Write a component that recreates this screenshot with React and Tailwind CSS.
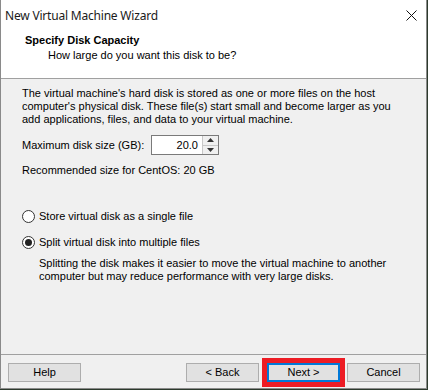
import React from "react";

function Btn({ children, focused }) {
  return (
    <div
      className={
        "w-[73px] h-[19px] flex items-center justify-center bg-[#e1e1e1] text-[11px] text-black " +
        (focused ? "border-2 border-[#0078d7]" : "border border-[#adadad]")
      }
    >
      {children}
    </div>
  );
}

function Radio({ checked, label }) {
  return (
    <div className="flex items-center h-[16px]">
      <div className="w-[13px] h-[13px] rounded-full border border-[#333] bg-white flex items-center justify-center">
        {checked && <div className="w-[7px] h-[7px] rounded-full bg-[#222]" />}
      </div>
      <span className="ml-[4px]">{label}</span>
    </div>
  );
}

export default function App() {
  return (
    <div className="w-[428px] h-[390px] bg-[#2c3a2c]" style={{ fontFamily: '"Liberation Sans", Arial, sans-serif' }}>
      <div className="w-[427px] h-[389px] flex flex-col bg-[#f0f0f0] border-l border-r border-b border-[#8a8a8a] text-[11px] text-black leading-[13px]">
        {/* Title bar */}
        <div className="h-[30px] bg-white flex items-center justify-between pl-[4px] pr-[8px] shrink-0">
          <span className="text-[12px] text-[#1a1a1a] tracking-[-0.2px]" style={{ fontFamily: '"Noto Sans", "Open Sans", sans-serif' }}>
            New Virtual Machine Wizard
          </span>
          <svg width="11" height="11" viewBox="0 0 11 11" className="mr-[1px]">
            <path d="M0.5 0.5 L10.5 10.5 M10.5 0.5 L0.5 10.5" stroke="#111" strokeWidth="1" />
          </svg>
        </div>
        {/* Header */}
        <div className="h-[49px] bg-white border-b border-[#a0a0a0] pt-[3px] shrink-0">
          <div className="pl-[24px] font-bold leading-[15px]">Specify Disk Capacity</div>
          <div className="pl-[47px] leading-[15px]">How large do you want this disk to be?</div>
        </div>
        {/* Body */}
        <div className="flex-1 pl-[21px] pt-[8px]">
          <p className="leading-[13px]">
            The virtual machine's hard disk is stored as one or more files on the host
            <br />
            computer's physical disk. These file(s) start small and become larger as you
            <br />
            add applications, files, and data to your virtual machine.
          </p>
          <div className="flex items-center mt-[9px] h-[20px]">
            <span className="w-[129px]">Maximum disk size (GB):</span>
            <div className="w-[68px] h-[20px] border border-[#7a7a7a] bg-white flex">
              <div className="flex-1 text-right pr-[4px] flex items-center justify-end">20.0</div>
              <div className="w-[16px] flex flex-col border-l border-[#c8c8c8]">
                <div className="flex-1 flex items-center justify-center border-b border-[#c8c8c8] bg-[#f0f0f0]">
                  <svg width="7" height="4" viewBox="0 0 7 4"><path d="M0 4 L3.5 0 L7 4 Z" fill="#333" /></svg>
                </div>
                <div className="flex-1 flex items-center justify-center bg-[#f0f0f0]">
                  <svg width="7" height="4" viewBox="0 0 7 4"><path d="M0 0 L3.5 4 L7 0 Z" fill="#333" /></svg>
                </div>
              </div>
            </div>
          </div>
          <div className="mt-[9px]">Recommended size for CentOS: 20 GB</div>
          <div className="mt-[31px]">
            <Radio label="Store virtual disk as a single file" />
          </div>
          <div className="mt-[10px]">
            <Radio checked label="Split virtual disk into multiple files" />
          </div>
          <p className="mt-[7px] pl-[17px] leading-[13px]">
            Splitting the disk makes it easier to move the virtual machine to another
            <br />
            computer but may reduce performance with very large disks.
          </p>
        </div>
        {/* Footer */}
        <div className="h-[34px] border-t border-[#a0a0a0] flex justify-between items-start pt-[8px] pl-[7px] pr-[6px] shrink-0">
          <Btn>Help</Btn>
          <div className="flex items-start">
            <Btn>&lt; Back</Btn>
            <div className="ml-[3px] -mt-[5px] border-[5px] border-[#ed1c24]">
              <Btn focused>Next &gt;</Btn>
            </div>
            <div className="ml-[2px]">
              <Btn>Cancel</Btn>
            </div>
          </div>
        </div>
      </div>
    </div>
  );
}
